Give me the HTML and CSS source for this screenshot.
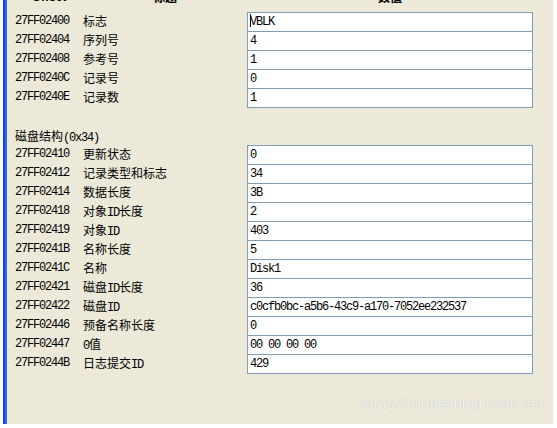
FILE: index.html
```html
<!DOCTYPE html>
<html>
<head>
<meta charset="utf-8">
<link rel="stylesheet" href="styles.css">
</head>
<body>
<div class="frame">
  <div class="bar"></div>
  <div class="panel">
    <div class="head"><span class="h-off">Offset</span><span class="h-name">标题</span><span class="h-val">数值</span></div>
    <div class="group">
      <div class="row"><span class="off">27FF02400</span><span class="name">标志</span><span class="val"><span class="caret"></span>VBLK</span></div>
      <div class="row"><span class="off">27FF02404</span><span class="name">序列号</span><span class="val">4</span></div>
      <div class="row"><span class="off">27FF02408</span><span class="name">参考号</span><span class="val">1</span></div>
      <div class="row"><span class="off">27FF0240C</span><span class="name">记录号</span><span class="val">0</span></div>
      <div class="row"><span class="off">27FF0240E</span><span class="name">记录数</span><span class="val">1</span></div>
    </div>
    <div class="section">磁盘结构<span class="l">(0x34)</span></div>
    <div class="group">
      <div class="row"><span class="off">27FF02410</span><span class="name">更新状态</span><span class="val">0</span></div>
      <div class="row"><span class="off">27FF02412</span><span class="name">记录类型和标志</span><span class="val">34</span></div>
      <div class="row"><span class="off">27FF02414</span><span class="name">数据长度</span><span class="val">3B</span></div>
      <div class="row"><span class="off">27FF02418</span><span class="name">对象<span class="l">ID</span>长度</span><span class="val">2</span></div>
      <div class="row"><span class="off">27FF02419</span><span class="name">对象<span class="l">ID</span></span><span class="val">403</span></div>
      <div class="row"><span class="off">27FF0241B</span><span class="name">名称长度</span><span class="val">5</span></div>
      <div class="row"><span class="off">27FF0241C</span><span class="name">名称</span><span class="val">Disk1</span></div>
      <div class="row"><span class="off">27FF02421</span><span class="name">磁盘<span class="l">ID</span>长度</span><span class="val">36</span></div>
      <div class="row"><span class="off">27FF02422</span><span class="name">磁盘<span class="l">ID</span></span><span class="val">c0cfb0bc-a5b6-43c9-a170-7052ee232537</span></div>
      <div class="row"><span class="off">27FF02446</span><span class="name">预备名称长度</span><span class="val">0</span></div>
      <div class="row"><span class="off">27FF02447</span><span class="name"><span class="l">0</span>值</span><span class="val">00 00 00 00</span></div>
      <div class="row"><span class="off">27FF0244B</span><span class="name">日志提交<span class="l">ID</span></span><span class="val">429</span></div>
    </div>
    <div class="mark">https://ni1igel.blog.csdn.net</div>
  </div>
</div>
</body>
</html>
```
FILE: styles.css
```css
html, body {
  margin: 0;
  padding: 0;
  background: #ffffff;
}
body {
  font-family: "Noto Sans CJK SC", sans-serif;
  font-size: 12px;
  color: #000000;
}
.frame {
  display: flex;
  height: 424px;
  margin: 0 4px 0 3px;
}
.bar {
  width: 4px;
  background: linear-gradient(to right, #0836d8, #1c5cf0 60%, #3a78f6);
}
.panel {
  flex: 1;
  position: relative;
  background: #ece9d8;
  padding-left: 8px;
  overflow: hidden;
}
.head {
  display: grid;
  grid-template-columns: 68px 164px 286px;
  height: 21px;
  margin-top: -9px;
  line-height: 12px;
  font-weight: bold;
  text-align: center;
}
.h-off {
  font-family: "Liberation Sans", sans-serif;
  font-size: 12px;
}
.row {
  display: grid;
  grid-template-columns: 68px 164px 286px;
  height: 19px;
  align-items: start;
}
.off, .val, .l {
  font-family: "Liberation Mono", monospace;
  font-size: 12px;
  letter-spacing: -1.2px;
}
.off {
  line-height: 19px;
}
.name {
  line-height: 19px;
  margin-top: -1px;
  white-space: nowrap;
}
.val {
  box-sizing: border-box;
  height: 20px;
  border: 1px solid #7f9db9;
  background: #ffffff;
  padding-left: 2px;
  line-height: 18px;
  white-space: pre;
}
.caret {
  display: inline-block;
  width: 1px;
  height: 13px;
  background: #000000;
  vertical-align: -2px;
  margin-right: -1px;
}
.section {
  height: 19px;
  line-height: 19px;
  margin-top: 19px;
}
.mark {
  position: absolute;
  right: 10px;
  top: 394px;
  font-family: "Liberation Sans", sans-serif;
  font-size: 15px;
  line-height: 20px;
  color: rgba(255, 255, 255, 0.85);
  text-shadow: 0 0 1px rgba(110, 110, 110, 0.45);
}
```
